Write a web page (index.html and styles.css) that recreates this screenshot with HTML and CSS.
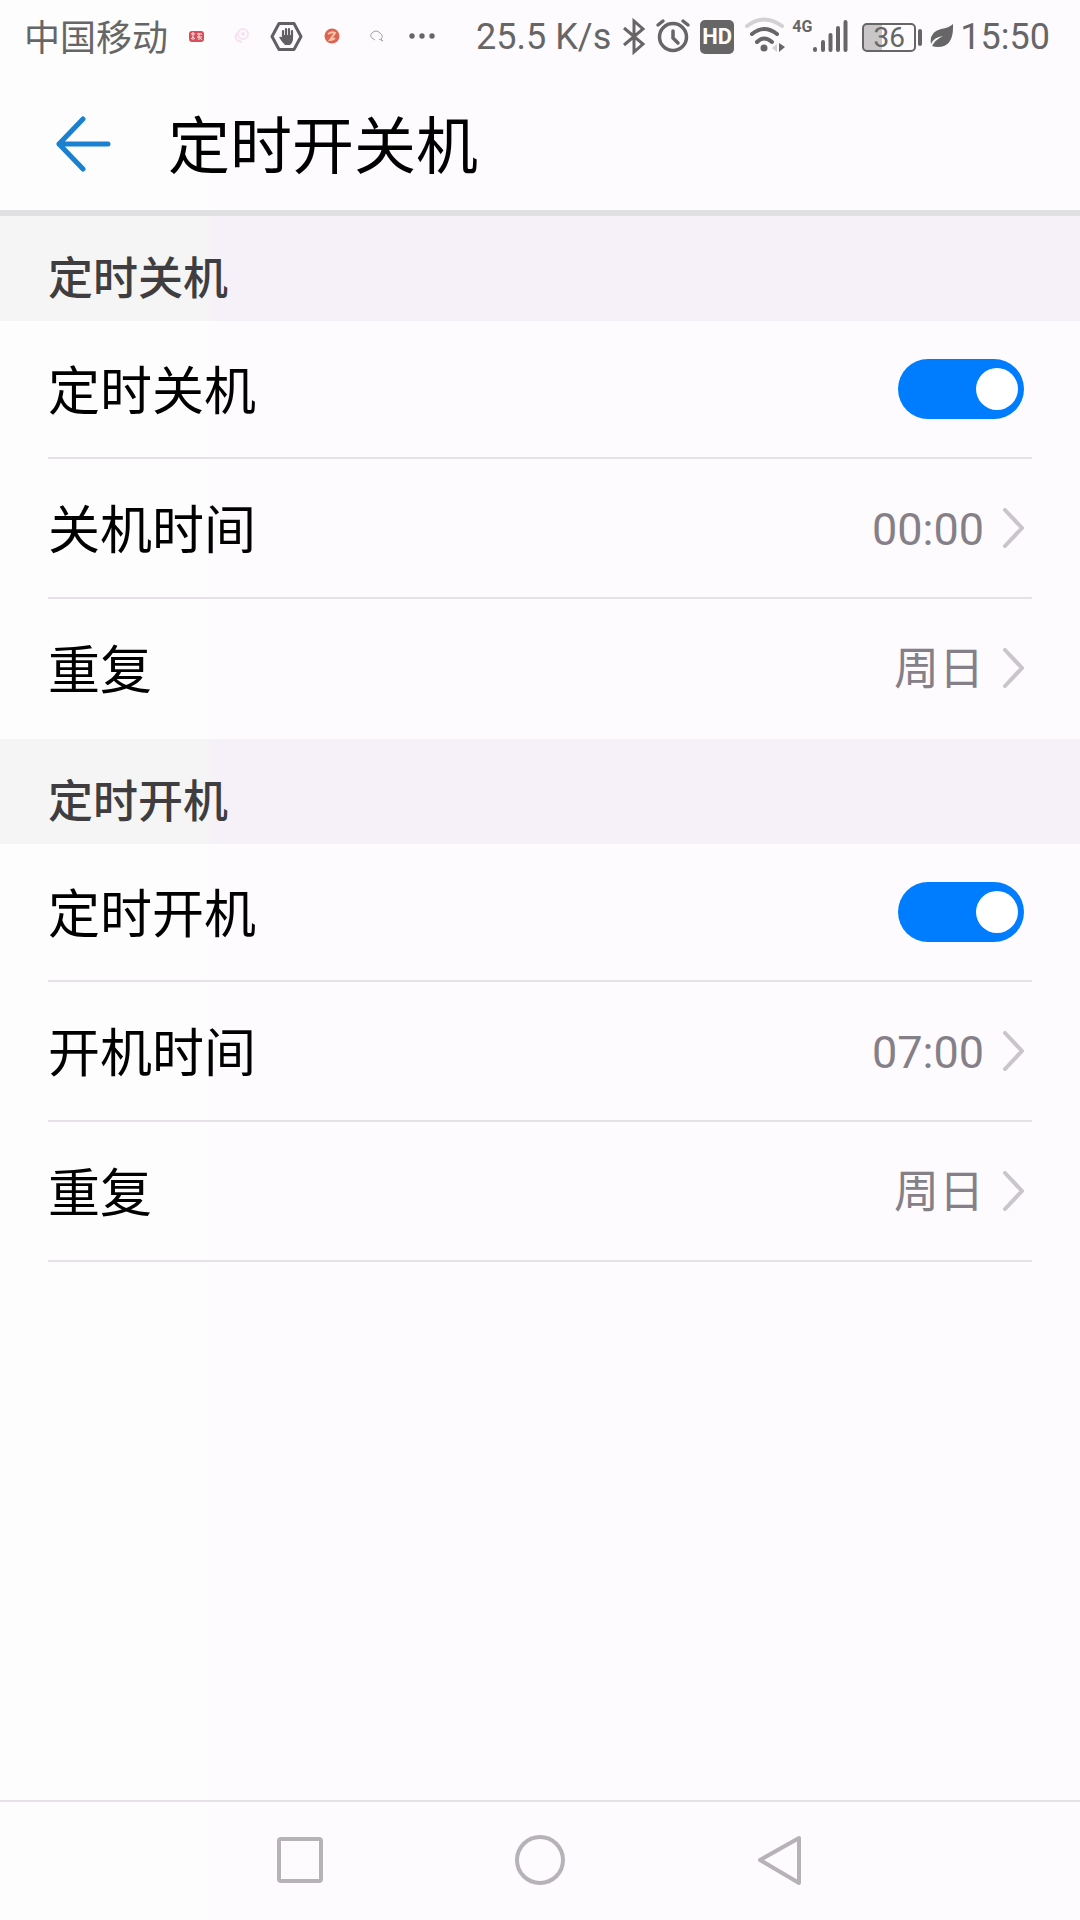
FILE: index.html
```html
<!DOCTYPE html>
<html lang="zh-CN">
<head>
    <meta charset="UTF-8">
    <meta name="viewport" content="width=device-width, initial-scale=1.0">
    <title>定时开关机</title>
    <link rel="stylesheet" href="styles.css">
</head>
<body>
    <div class="status-bar">
        <div class="status-left">
            <span>中国移动</span>
            <svg width="33" height="40" viewBox="0 0 33 40">
                <rect x="9" y="14" width="15" height="11" rx="3" fill="#d9505c"/>
                <path d="M11 17h4M13 15v8M11 22l2-2 2 2M17 17h5M17 20h5M19 16v7M22 23l-2-2" stroke="#fbe4e6" stroke-width="1" fill="none"/>
            </svg>
            <svg width="33" height="40" viewBox="0 0 33 40" fill="none" stroke="#f5e3f1" stroke-width="2">
                <circle cx="18" cy="17" r="5"/>
                <circle cx="18" cy="17" r="1"/>
                <path d="M12 16c-3 5-1 8 5 9"/>
            </svg>
            <svg width="33" height="40" viewBox="0 0 33 40">
                <path d="M9 6.500h15l7 13-7 13h-15l-7-13z" fill="none" stroke="#625f64" stroke-width="3" stroke-linejoin="round"/>
                <path d="M13 20v-6M16 20v-8M19 20v-8M22 20v-6" stroke="#625f64" stroke-width="2.200" stroke-linecap="round"/>
                <path d="M12 18h11v5q-1 4-3 5h-5q-4-4-6-8 2-1 4 1z" fill="#625f64"/>
            </svg>
            <svg width="33" height="40" viewBox="0 0 33 40">
                <circle cx="17" cy="19" r="7.500" fill="#dd6450"/>
                <path d="M13 17q4-3 7-1l-5 7q3 0 5-2" fill="none" stroke="#f7c3a8" stroke-width="2"/>
            </svg>
            <svg width="33" height="40" viewBox="0 0 33 40">
                <path d="M13 22q-4-3-1-6 4-4 8 0 4 3 1 6l2 2-4-2M12 21l3 2" fill="none" stroke="#a3a0a6" stroke-width="1"/>
            </svg>
            <svg width="33" height="40" viewBox="0 0 33 40" fill="#666">
                <circle cx="7" cy="19" r="2.700"/>
                <circle cx="17" cy="19" r="2.700"/>
                <circle cx="27" cy="19" r="2.700"/>
            </svg>
        </div>
        <div class="status-right">
            <span>25.5 K/s</span>
            <!-- bluetooth -->
            <svg width="31" height="40" viewBox="0 0 31 40" fill="none" stroke="#666" stroke-width="3">
                <path d="M7 11l19 16-9 8V4l9 8L7 28"/>
            </svg>
            <!-- alarm -->
            <svg width="40" height="40" viewBox="0 0 40 40" fill="none" stroke="#666" stroke-width="3.500" stroke-linecap="round">
                <circle cx="19" cy="20" r="13.500"/>
                <path d="M19 14v7l5 5M4 8l5-4M29 4l5 4"/>
            </svg>
            <span class="hd">HD</span>
            <!-- wifi -->
            <svg width="42" height="40" viewBox="0 0 42 40" fill="none" stroke="#666" stroke-width="4" stroke-linecap="round">
                <path d="M3 9q17-13 35 0" stroke="#d3d1d4"/>
                <path d="M8 17q12-10 25 0M13 25q7-7 15 0"/>
                <circle cx="20" cy="31" r="3.500" fill="#666" stroke="none"/>
                <path d="M33 27v8l-5-4z" fill="#d3d1d4" stroke="none"/>
                <path d="M35 26v9l6-5z" fill="#666" stroke="none"/>
            </svg>
            <div class="signal">
                <span class="network">4G</span>
                <svg width="38" height="40" viewBox="0 0 38 40" stroke="#666" stroke-width="4" stroke-linecap="round">
                    <path d="M3 32v1M11 25v8M18.500 18v15M26 11v22M33.500 5v28"/>
                </svg>
            </div>
            <div class="battery"><span>36</span></div>
            <!-- power saving leaf -->
            <svg width="24" height="40" viewBox="0 0 24 40">
                <path d="M23 7q1 23-15 23-4 0-6-1 3-6 11-10-9 1-12 8-2-12 10-15 8-1 12-5z" fill="#666"/>
            </svg>
            <span>15:50</span>
        </div>
    </div>

    <header class="title-bar">
        <button class="back" type="button" aria-label="返回">
            <svg width="56" height="56" viewBox="0 0 56 56" fill="none" stroke="#1a80cf" stroke-width="5" stroke-linecap="round" stroke-linejoin="round">
                <path d="M52 28H3M27 3L3 28l24 25"/>
            </svg>
        </button>
        <h1>定时开关机</h1>
    </header>

    <main>
        <section>
            <h2>定时关机</h2>
            <div class="list">
                <label class="row">
                    <span>定时关机</span>
                    <input class="switch" type="checkbox" checked>
                </label>
                <button class="row" type="button">
                    <span>关机时间</span>
                    <span class="value">00:00</span>
                    <svg class="arrow" width="22" height="40" viewBox="0 0 22 40"><path d="M3 2l17 18L3 38"/></svg>
                </button>
                <button class="row" type="button">
                    <span>重复</span>
                    <span class="value">周日</span>
                    <svg class="arrow" width="22" height="40" viewBox="0 0 22 40"><path d="M3 2l17 18L3 38"/></svg>
                </button>
            </div>
        </section>
        <section>
            <h2>定时开机</h2>
            <div class="list">
                <label class="row">
                    <span>定时开机</span>
                    <input class="switch" type="checkbox" checked>
                </label>
                <button class="row" type="button">
                    <span>开机时间</span>
                    <span class="value">07:00</span>
                    <svg class="arrow" width="22" height="40" viewBox="0 0 22 40"><path d="M3 2l17 18L3 38"/></svg>
                </button>
                <button class="row" type="button">
                    <span>重复</span>
                    <span class="value">周日</span>
                    <svg class="arrow" width="22" height="40" viewBox="0 0 22 40"><path d="M3 2l17 18L3 38"/></svg>
                </button>
            </div>
        </section>
    </main>

    <nav class="nav-bar">
        <button type="button" aria-label="最近任务">
            <svg width="52" height="52" viewBox="0 0 52 52"><rect x="5" y="4" width="42" height="42" rx="2"/></svg>
        </button>
        <button type="button" aria-label="主屏幕">
            <svg width="52" height="52" viewBox="0 0 52 52"><circle cx="26" cy="25" r="23"/></svg>
        </button>
        <button type="button" aria-label="返回">
            <svg width="52" height="52" viewBox="0 0 52 52"><path d="M45 3v45L6 25z"/></svg>
        </button>
    </nav>
</body>
</html>
```

FILE: styles.css
```css
* {
    box-sizing: border-box;
}

body {
    margin: 0;
    min-height: 100vh;
    display: flex;
    flex-direction: column;
    font-family: Roboto, "Noto Sans CJK SC", sans-serif;
    background: linear-gradient(to right, #fdfdfd 19%, #fefbff 20%);
    color: #000;
}

button {
    padding: 0;
    border: none;
    background: none;
    font: inherit;
    color: inherit;
    cursor: pointer;
}

svg {
    display: block;
    flex: none;
}

/* status bar */
.status-bar {
    display: flex;
    justify-content: space-between;
    height: 74px;
    padding: 0 30px 0 24px;
    font-size: 36px;
    line-height: 40px;
    color: #666;
}

.status-left,
.status-right {
    display: flex;
    align-items: center;
    white-space: nowrap;
}

.status-left {
    gap: 12px;
}

.status-left span {
    padding-top: 4px;
}

.status-right {
    gap: 6px;
}

.hd {
    width: 34px;
    height: 34px;
    margin-right: 4px;
    border-radius: 5px;
    background: #666;
    color: #fff;
    font-size: 22px;
    font-weight: 700;
    line-height: 34px;
    text-align: center;
}

.signal {
    display: flex;
    padding-right: 6px;
}

.network {
    align-self: flex-start;
    font-size: 16px;
    font-weight: 700;
    line-height: 20px;
}

.battery {
    position: relative;
    width: 54px;
    height: 29px;
    margin-right: 8px;
    border: 2px solid #666;
    border-radius: 5px;
    background: linear-gradient(to right, #c8c6c9 36%, transparent 36%);
    font-size: 28px;
    line-height: 26px;
    text-align: center;
}

.battery::after {
    content: "";
    position: absolute;
    top: 4px;
    right: -8px;
    width: 4px;
    height: 17px;
    border-radius: 2px;
    background: #666;
}

/* title */
.title-bar {
    display: flex;
    align-items: center;
    gap: 56px;
    height: 142px;
    padding: 4px 56px 0;
    border-bottom: 6px solid #e0dfe1;
}

h1 {
    margin: 0;
    padding-top: 8px;
    font-size: 62px;
    font-weight: 400;
    line-height: 80px;
}

/* settings */
main {
    flex: 1;
}

h2 {
    height: 105px;
    margin: 0;
    padding: 28px 48px 0;
    background: linear-gradient(to right, #f5f5f5 19%, #f6f1f8 20%);
    color: #3f3d40;
    font-size: 45px;
    font-weight: 500;
    line-height: 72px;
}

.list {
    padding: 0 48px;
}

.row {
    display: flex;
    align-items: center;
    width: 100%;
    height: 140px;
    padding-right: 8px;
    border-bottom: 2px solid #e5e1e7;
    font-size: 52px;
    line-height: 72px;
    text-align: left;
}

.row:first-child {
    height: 138px;
}

section:first-child .row:last-child {
    border-bottom-color: transparent;
}

.row span:first-child {
    flex: 1;
    padding-top: 8px;
}

.row .value {
    padding-top: 4px;
    color: #858087;
    font-size: 45px;
}

.arrow {
    margin-left: 18px;
    fill: none;
    stroke: #c9c5cb;
    stroke-width: 4;
    stroke-linecap: round;
}

.switch {
    appearance: none;
    display: flex;
    align-items: center;
    width: 126px;
    height: 60px;
    margin: 0;
    padding: 0 6px;
    border-radius: 30px;
    background: #ccc;
    cursor: pointer;
}

.switch::before {
    content: "";
    width: 42px;
    height: 42px;
    border-radius: 50%;
    background: #fff;
}

.switch:checked {
    justify-content: flex-end;
    background: #007dff;
}

/* navigation */
.nav-bar {
    display: flex;
    justify-content: center;
    gap: 188px;
    height: 120px;
    border-top: 2px solid #e5e1e7;
}

.nav-bar svg {
    fill: none;
    stroke: #b6b2b8;
    stroke-width: 4;
    stroke-linejoin: round;
}
```
